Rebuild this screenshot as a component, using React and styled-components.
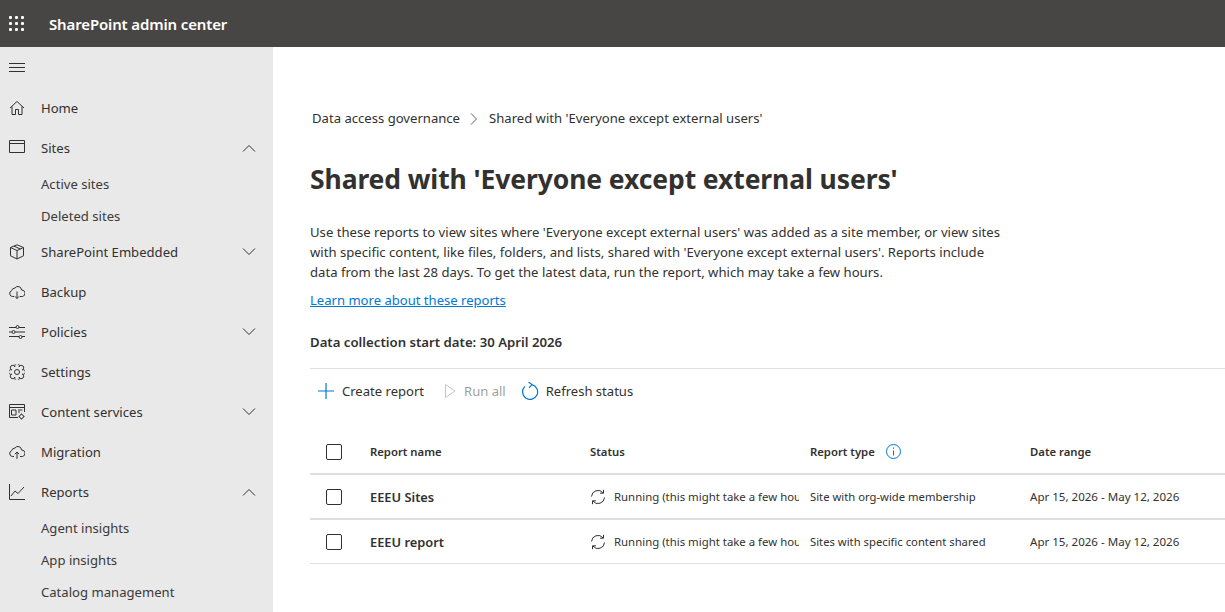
import React from 'react';
import styled, { createGlobalStyle } from 'styled-components';

const FONT = '"Noto Sans", "Open Sans", sans-serif';

const GlobalStyle = createGlobalStyle`
  html, body {
    margin: 0;
    height: 100%;
    overflow: hidden;
    background: #fff;
    font-family: ${FONT};
    color: #323130;
  }
  * { box-sizing: border-box; }
`;

const Page = styled.div`
  display: flex;
  flex-direction: column;
  height: 612px;
  overflow: hidden;
`;

const TopBar = styled.header`
  display: flex;
  align-items: center;
  flex: 0 0 47px;
  background: #484644;
  color: #fff;
`;

const Waffle = styled.div`
  display: grid;
  grid-template-columns: repeat(3, 3px);
  gap: 3px;
  margin: 0 25px 0 9px;
  span { width: 3px; height: 3px; background: #fff; border-radius: 1px; }
`;

const AppName = styled.div`
  font-size: 15px;
  font-weight: 600;
  letter-spacing: -0.14px;
`;

const Body = styled.div`
  display: flex;
  flex: 1;
  min-height: 0;
`;

const Sidebar = styled.nav`
  flex: 0 0 273px;
  background: #e9e9e9;
  overflow: hidden;
`;

const Burger = styled.div`
  display: flex;
  align-items: center;
  height: 41px;
  padding-left: 9px;
`;

const NavRow = styled.div`
  display: flex;
  align-items: center;
  height: 40px;
  padding-left: 9px;
  font-size: 13.1px;
  color: #323130;
  svg.icon { width: 16px; height: 16px; margin-right: 16px; flex: none; }
`;

const NavLabel = styled.span`
  flex: 1;
`;

const Chevron = styled.svg`
  width: 14px;
  height: 8px;
  margin-right: 17px;
`;

const SubRow = styled.div`
  display: flex;
  align-items: center;
  height: 32px;
  padding-left: 41px;
  font-size: 13.1px;
  color: #3b3a39;
`;

const Main = styled.main`
  flex: 1;
  min-width: 0;
  padding: 60px 0 0 37px;
`;

const Breadcrumb = styled.div`
  display: flex;
  align-items: center;
  height: 22px;
  padding-left: 2px;
  font-size: 13.1px;
  color: #323130;
  svg { width: 8px; height: 12px; margin: 2px 11px 0 10px; }
`;

const Title = styled.h1`
  margin: 31px 0 0;
  font-size: 26.5px;
  line-height: 38px;
  font-weight: 700;
  color: #323130;
  letter-spacing: -0.1px;
`;

const Intro = styled.p`
  margin: 24px 0 0;
  width: 700px;
  font-size: 13.13px;
  line-height: 20px;
  color: #323130;
`;

const LearnLink = styled.a`
  display: block;
  margin-top: 8px;
  font-size: 13.07px;
  line-height: 20px;
  color: #0078d4;
  text-decoration: underline;
`;

const CollectionDate = styled.div`
  margin-top: 22px;
  font-size: 13.2px;
  line-height: 20px;
  font-weight: 600;
  color: #323130;
`;

const Toolbar = styled.div`
  display: flex;
  align-items: center;
  height: 45px;
  margin-top: 16px;
  padding-left: 8px;
  border-top: 1px solid #e1dfdd;
`;

const ToolButton = styled.div`
  display: flex;
  align-items: center;
  gap: ${p => p.$gap}px;
  margin-right: ${p => p.$after || 0}px;
  font-size: 13.05px;
  color: ${p => (p.$disabled ? '#a19f9d' : '#323130')};
`;

const Table = styled.div`
  margin-top: 17px;
`;

const Row = styled.div`
  display: grid;
  grid-template-columns: 60px 220px 220px 220px 1fr;
  align-items: center;
  height: ${p => p.$height}px;
  border-bottom: ${p => p.$rule}px solid #e1dfdd;
`;

const CheckCell = styled.div`
  padding-left: 16px;
`;

const Checkbox = styled.div`
  width: 16px;
  height: 16px;
  border: 1px solid #323130;
  border-radius: 2px;
`;

const HeadCell = styled.div`
  display: flex;
  align-items: center;
  gap: 11px;
  font-size: 11.3px;
  font-weight: 600;
  color: #323130;
`;

const NameCell = styled.div`
  font-size: 12.85px;
  font-weight: 600;
  color: #323130;
`;

const StatusCell = styled.div`
  display: flex;
  align-items: center;
  gap: 8px;
  width: 209px;
  white-space: nowrap;
  font-size: 11.4px;
  color: #323130;
  svg { flex: none; }
`;

const StatusText = styled.span`
  min-width: 0;
  overflow: hidden;
`;

const TextCell = styled.div`
  font-size: ${p => p.$size}px;
  color: #323130;
  white-space: nowrap;
`;

const Ico = ({ children }) => (
  <svg className="icon" viewBox="0 0 16 16" fill="none" stroke="#323130" strokeWidth="1">
    {children}
  </svg>
);

// eight scalloped teeth round the centre of the 16px box
const gearPath = () => {
  const at = (deg, r) => {
    const a = (deg * Math.PI) / 180;
    return `${(8 + r * Math.cos(a)).toFixed(2)} ${(8 + r * Math.sin(a)).toFixed(2)}`;
  };
  let d = `M${at(-22.5, 5.6)}`;
  for (let i = 0; i < 8; i += 1) {
    const end = -22.5 + (i + 1) * 45;
    d += `A2.35 2.35 0 1 1 ${at(end, 5.6)}`;
  }
  return `${d}Z`;
};

const icons = {
  home: <Ico><path d="M1 8 8 1.5 15 8M3 6.5V14.5H6.5V9.5H9.5V14.5H13V6.5" /></Ico>,
  sites: <Ico><path d="M.5 .5h15v12H.5zM.5 3.5h15" /></Ico>,
  box: <Ico><path d="M8 .8 14.5 3.5V11.8L8 15 1.5 11.8V3.5zM1.5 3.5 8 6.5 14.5 3.5M8 6.5V15M5 2.1l6.3 2.9" /></Ico>,
  backup: <Ico><path d="M5 12.5H3.7A3 3 0 0 1 2.6 6.7 3.6 3.6 0 0 1 6 4a3.8 3.8 0 0 1 4-1.4A3.6 3.6 0 0 1 12.5 6a3.3 3.3 0 0 1 1 6.5H11M8 7.5V14.5M5.8 12.3 8 14.5l2.2-2.2" /></Ico>,
  policies: <Ico><path d="M0 3.5h7M10 3.5h6M0 8h3M6 8h10M0 12.5h10M13 12.5h3" /><circle cx="8.5" cy="3" r="1.5" /><circle cx="4.5" cy="8" r="1.5" /><circle cx="11.5" cy="13" r="1.5" /></Ico>,
  gear: <Ico><circle cx="8" cy="8" r="2.5" /><path d={gearPath()} /></Ico>,
  content: <Ico><path d="M9 13.5H.5V.5h15V8M.5 3.5h15M2.5 6h4.5v5H2.5zM9 6h4.5M9 8h2" /><circle cx="12.5" cy="12.5" r="2" /><path d="M12.5 9.5v1M12.5 14.5v1M9.5 12.5h1M14.5 12.5h1" /></Ico>,
  migration: <Ico><path d="M5 12.5H3.7A3 3 0 0 1 2.6 6.7 3.6 3.6 0 0 1 6 4a3.8 3.8 0 0 1 4-1.4A3.6 3.6 0 0 1 12.5 6a3.3 3.3 0 0 1 1 6.5H11M8 15V8M5.8 10.2 8 8l2.2 2.2" /></Ico>,
  reports: <Ico><path d="M.5 0V15.5H16M2 12 6 7l3 2.5L15 3" /></Ico>,
};

const ChevronIcon = ({ up }) => (
  <Chevron viewBox="0 0 14 8" fill="none" stroke="#323130" strokeWidth="1">
    <path d={up ? 'M1 7.5 7 1.5l6 6' : 'M1 .5l6 6 6-6'} />
  </Chevron>
);

const Sync = () => (
  <svg width="16" height="16" viewBox="0 0 16 16" fill="none" stroke="#323130" strokeWidth="1">
    <path d="M1.5 7.5A6.5 6.5 0 0 1 13 3.8M14.5 8.5A6.5 6.5 0 0 1 3 12.2M13.5.8v3.4h-3.4M2.5 15.2v-3.4h3.4" />
  </svg>
);

const navTop = [
  { icon: 'home', label: 'Home' },
  { icon: 'sites', label: 'Sites', chevron: 'up', children: ['Active sites', 'Deleted sites'] },
  { icon: 'box', label: 'SharePoint Embedded', chevron: 'down' },
  { icon: 'backup', label: 'Backup' },
  { icon: 'policies', label: 'Policies', chevron: 'down' },
  { icon: 'gear', label: 'Settings' },
  { icon: 'content', label: 'Content services', chevron: 'down' },
  { icon: 'migration', label: 'Migration' },
  { icon: 'reports', label: 'Reports', chevron: 'up', children: ['Agent insights', 'App insights', 'Catalog management'] },
];

const reports = [
  { name: 'EEEU Sites', type: 'Site with org-wide membership', height: 45, rule: 2 },
  { name: 'EEEU report', type: 'Sites with specific content shared', height: 44, rule: 1 },
];

const App = () => (
  <Page>
    <GlobalStyle />
    <TopBar>
      <Waffle>
        {Array.from({ length: 9 }, (_, i) => <span key={i} />)}
      </Waffle>
      <AppName>SharePoint admin center</AppName>
    </TopBar>
    <Body>
      <Sidebar>
        <Burger>
          <svg width="16" height="10" viewBox="0 0 16 10" stroke="#323130" strokeWidth="1">
            <path d="M0 .5h16M0 4.5h16M0 8.5h16" />
          </svg>
        </Burger>
        {navTop.map(item => (
          <React.Fragment key={item.label}>
            <NavRow>
              {icons[item.icon]}
              <NavLabel>{item.label}</NavLabel>
              {item.chevron && <ChevronIcon up={item.chevron === 'up'} />}
            </NavRow>
            {item.children && item.children.map(c => <SubRow key={c}>{c}</SubRow>)}
          </React.Fragment>
        ))}
      </Sidebar>
      <Main>
        <Breadcrumb>
          Data access governance
          <svg viewBox="0 0 8 12" fill="none" stroke="#605e5c" strokeWidth="1"><path d="M1 .5 6.5 6 1 11.5" /></svg>
          Shared with 'Everyone except external users'
        </Breadcrumb>
        <Title>Shared with 'Everyone except external users'</Title>
        <Intro>
          Use these reports to view sites where 'Everyone except external users' was added as a site member, or view sites
          with specific content, like files, folders, and lists, shared with 'Everyone except external users'. Reports include
          data from the last 28 days. To get the latest data, run the report, which may take a few hours.
        </Intro>
        <LearnLink href="#">Learn more about these reports</LearnLink>
        <CollectionDate>Data collection start date: 30 April 2026</CollectionDate>
        <Toolbar>
          <ToolButton $gap={8} $after={20}>
            <svg width="16" height="16" viewBox="0 0 16 16" stroke="#0078d4" strokeWidth="1.2"><path d="M8 0v16M0 8h16" /></svg>
            Create report
          </ToolButton>
          <ToolButton $disabled $gap={8} $after={16}>
            <svg width="12" height="14" viewBox="0 0 12 14" fill="none" stroke="#c8c6c4" strokeWidth="1"><path d="M1.5 .5 11 7l-9.5 6.5z" /></svg>
            Run all
          </ToolButton>
          <ToolButton $gap={7}>
            <svg width="17" height="18" viewBox="0 0 17 18" fill="none" stroke="#0078d4" strokeWidth="1.2"><path d="M9.8 2.6A7.5 7.5 0 1 1 3 4.4M6.5 0 10 2.6 7 5.8" /></svg>
            Refresh status
          </ToolButton>
        </Toolbar>
        <Table>
          <Row $height={45} $rule={2}>
            <CheckCell><Checkbox /></CheckCell>
            <HeadCell>Report name</HeadCell>
            <HeadCell>Status</HeadCell>
            <HeadCell>
              Report type
              <svg width="15" height="15" viewBox="0 0 15 15" fill="none" stroke="#0078d4" strokeWidth="1">
                <circle cx="7.5" cy="7.5" r="7" /><path d="M7.5 6.5v5M7.5 3.5v1.4" />
              </svg>
            </HeadCell>
            <HeadCell>Date range</HeadCell>
          </Row>
          {reports.map(r => (
            <Row key={r.name} $height={r.height} $rule={r.rule}>
              <CheckCell><Checkbox /></CheckCell>
              <NameCell>{r.name}</NameCell>
              <StatusCell><Sync /><StatusText>Running (this might take a few hours)</StatusText></StatusCell>
              <TextCell $size={11.27}>{r.type}</TextCell>
              <TextCell $size={11.55}>Apr 15, 2026 - May 12, 2026</TextCell>
            </Row>
          ))}
        </Table>
      </Main>
    </Body>
  </Page>
);

export default App;
